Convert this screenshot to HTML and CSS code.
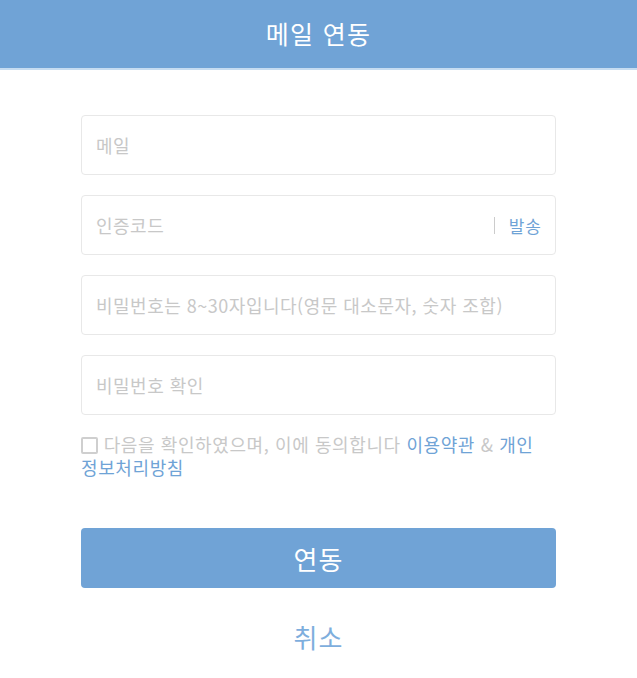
FILE: index.html
```html
<!DOCTYPE html>
<html lang="ko">
<head>
  <meta charset="UTF-8" />
  <meta name="viewport" content="width=device-width, initial-scale=1.0" />
  <title>메일 연동</title>
  <link rel="stylesheet" href="styles.css">
</head>
<body>
  <div class="header">메일 연동</div>

  <form class="bind-form">
    <div class="fields">
      <div class="field">
        <input type="text" placeholder="메일" />
      </div>
      <div class="field">
        <input type="text" placeholder="인증코드" />
        <span class="send">발송</span>
      </div>
      <div class="field">
        <input type="password" placeholder="비밀번호는 8~30자입니다(영문 대소문자, 숫자 조합)" />
      </div>
      <div class="field">
        <input type="password" placeholder="비밀번호 확인" />
      </div>
    </div>

    <label class="agree">
      <span class="box"></span>
      다음을 확인하였으며, 이에 동의합니다 <a href="#">이용약관</a> &amp; <a href="#">개인정보처리방침</a>
    </label>

    <button type="button" class="submit">연동</button>
    <a href="#" class="cancel">취소</a>
  </form>
</body>
</html>
```

FILE: styles.css
```css
* {
  box-sizing: border-box;
  margin: 0;
  padding: 0;
  font-family: "Noto Sans CJK KR", "Noto Sans", sans-serif;
}

body {
  background: #fff;
}

.header {
  height: 70px;
  line-height: 66px;
  background: #70a3d6;
  border-bottom: 2px solid #c6dcf1;
  color: #fff;
  font-size: 25px;
  letter-spacing: 1.3px;
  text-align: center;
}

.bind-form {
  width: 475px;
  margin: 45px auto 0;
}

.fields {
  display: flex;
  flex-direction: column;
  gap: 20px;
  margin-bottom: 18px;
}

.field {
  display: flex;
  align-items: center;
  height: 60px;
  border: 1px solid #e8e8e8;
  border-radius: 4px;
  padding: 0 13px 0 14px;
}

.field input {
  flex: 1;
  min-width: 0;
  border: none;
  outline: none;
  font-size: 18px;
  letter-spacing: 0.5px;
  color: #333;
  background: transparent;
}

.field input::placeholder {
  color: #c8c8c8;
}

.send {
  border-left: 1px solid #ccc;
  padding-left: 14px;
  line-height: 17px;
  font-size: 17px;
  letter-spacing: 1px;
  color: #6fa3d6;
  cursor: pointer;
}

.agree {
  display: block;
  padding-right: 14px;
  font-size: 18px;
  letter-spacing: 0.6px;
  line-height: 23px;
  color: #c8c8c8;
}

.agree .box {
  display: inline-block;
  width: 17px;
  height: 17px;
  border: 2px solid #cfcfcf;
  border-radius: 2px;
  vertical-align: -2px;
}

.agree a {
  color: #6fa3d6;
  text-decoration: none;
}

.submit {
  display: block;
  width: 100%;
  height: 60px;
  margin-top: 49px;
  background: #70a3d6;
  border: none;
  border-radius: 4px;
  color: #fff;
  font-size: 26px;
  letter-spacing: 1px;
  cursor: pointer;
}

.cancel {
  display: block;
  margin-top: 31px;
  line-height: 36px;
  text-align: center;
  font-size: 26px;
  letter-spacing: 1px;
  color: #7eaedd;
  text-decoration: none;
}
```
